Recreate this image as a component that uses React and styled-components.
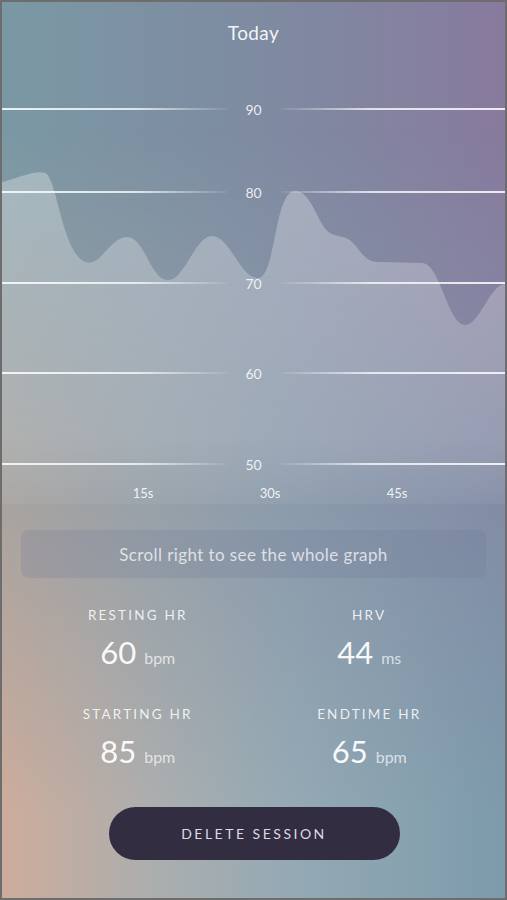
import React from 'react';
import styled, { createGlobalStyle } from 'styled-components';

const GlobalStyle = createGlobalStyle`
    html, body {
        margin: 0;
        padding: 0;
        background: #6d6d6d;
    }
    * {
        box-sizing: border-box;
    }
`

const Frame = styled.div`
    position: relative;
    width: 507px;
    height: 900px;
    border: 2px solid #6d6d6d;
    overflow: hidden;
    display: flex;
    flex-direction: column;
    font-family: Lato, "Open Sans", sans-serif;
    color: #fff;
    background: linear-gradient(to right, #7a98a4 0%, #7f8aa1 55%, #887a9e 100%);

    &::before {
        content: '';
        position: absolute;
        inset: 0;
        background: linear-gradient(to right, #cdac9b 0%, #acaeae 30%, #94a9b4 58%, #7d9bab 100%);
        -webkit-mask-image: linear-gradient(to bottom, transparent 14%, rgba(0,0,0,0.5) 52%, #000 90%);
        mask-image: linear-gradient(to bottom, transparent 14%, rgba(0,0,0,0.5) 52%, #000 90%);
    }
`

const Header = styled.div`
    position: relative;
    height: 62px;
    padding-top: 20px;
    text-align: center;
    font-size: 19px;
    line-height: 22px;
    color: rgba(255, 255, 255, 0.92);
    letter-spacing: 0.4px;
`

const Chart = styled.div`
    position: relative;
    height: 440px;
    display: flex;
    flex-direction: column;
`

const Curve = styled.svg`
    position: absolute;
    top: 0;
    left: 0;
    width: 503px;
    height: 440px;
`

const GridRow = styled.div`
    position: relative;
    z-index: 1;
    height: 20px;
    margin-top: ${p => p.$mt}px;
    display: flex;
    align-items: center;
`

const Line = styled.div`
    flex: 1;
    height: 1.5px;
    background: linear-gradient(
        ${p => (p.$side === 'left' ? 'to right' : 'to left')},
        rgba(255, 255, 255, 0.85) 0%,
        rgba(255, 255, 255, 0.75) 60%,
        rgba(255, 255, 255, 0.05) 100%
    );
`

const GridLabel = styled.span`
    width: 54px;
    text-align: center;
    font-size: 14px;
    color: rgba(255, 255, 255, 0.85);
`

const XAxis = styled.div`
    position: relative;
    z-index: 1;
    margin-top: 9px;
    padding-left: 33px;
    display: flex;
    justify-content: center;
    line-height: 20px;
`

const Tick = styled.span`
    width: 127px;
    text-align: center;
    font-size: 13px;
    color: rgba(255, 255, 255, 0.88);
`

const Banner = styled.div`
    position: relative;
    margin: 26px 19px 0;
    height: 48px;
    border-radius: 8px;
    background: rgba(110, 120, 150, 0.22);
    display: flex;
    align-items: center;
    justify-content: center;
    font-size: 17px;
    color: rgba(255, 255, 255, 0.72);
    letter-spacing: 0.4px;
`

const Stats = styled.div`
    position: relative;
    margin-top: 29px;
    padding: 0 20px;
    display: grid;
    grid-template-columns: 1fr 1fr;
    row-gap: 36px;
`

const Stat = styled.div`
    display: flex;
    flex-direction: column;
    align-items: center;
`

const StatLabel = styled.div`
    font-size: 13.5px;
    line-height: 16px;
    letter-spacing: 2.2px;
    color: rgba(255, 255, 255, 0.85);
`

const StatValue = styled.div`
    margin-top: 11px;
    height: 36px;
    display: flex;
    align-items: baseline;
    gap: 8px;
    font-size: 31px;
    line-height: 36px;
    color: rgba(255, 255, 255, 0.95);

    span {
        font-size: 16px;
        color: rgba(255, 255, 255, 0.7);
    }
`

const Button = styled.button`
    position: relative;
    align-self: center;
    margin-top: 38px;
    margin-left: 1px;
    width: 291px;
    height: 53px;
    border: none;
    border-radius: 27px;
    background: #332d41;
    color: #dcdae3;
    font-family: Lato, "Open Sans", sans-serif;
    font-size: 14px;
    letter-spacing: 2.5px;
    cursor: pointer;
`

const gridLines = [
    { value: 90, mt: 35 },
    { value: 80, mt: 63 },
    { value: 70, mt: 71 },
    { value: 60, mt: 70 },
    { value: 50, mt: 71 },
]

const stats = [
    { label: 'RESTING HR', value: 60, unit: 'bpm' },
    { label: 'HRV', value: 44, unit: 'ms' },
    { label: 'STARTING HR', value: 85, unit: 'bpm' },
    { label: 'ENDTIME HR', value: 65, unit: 'bpm' },
]

const curvePath = `
    M2,182
    C20,178 34,170 45,173
    C57,177 62,252 85,262
    C100,268 110,237 127,237
    C145,237 150,280 168,280
    C185,280 195,236 212,236
    C230,236 240,278 258,278
    C276,278 274,191 295,191
    C312,191 318,226 330,233
    C338,237 342,236 348,239
    C358,244 362,262 378,262
    L422,263
    C440,263 448,325 465,325
    C480,325 490,284 505,284
    L505,504 L2,504 Z
`

export default function App() {
    return (
        <>
            <GlobalStyle />
            <Frame>
                <Header>Today</Header>
                <Chart>
                    <Curve viewBox="2 64 503 440" preserveAspectRatio="none">
                        <defs>
                            <linearGradient id="fill" x1="0" y1="170" x2="0" y2="504" gradientUnits="userSpaceOnUse">
                                <stop offset="0" stopColor="#fff" stopOpacity="0.3" />
                                <stop offset="0.8" stopColor="#fff" stopOpacity="0.17" />
                                <stop offset="1" stopColor="#fff" stopOpacity="0.05" />
                            </linearGradient>
                        </defs>
                        <path d={curvePath} fill="url(#fill)" />
                    </Curve>
                    {gridLines.map(g => (
                        <GridRow key={g.value} $mt={g.mt}>
                            <Line $side="left" />
                            <GridLabel>{g.value}</GridLabel>
                            <Line $side="right" />
                        </GridRow>
                    ))}
                    <XAxis>
                        <Tick>15s</Tick>
                        <Tick>30s</Tick>
                        <Tick>45s</Tick>
                    </XAxis>
                </Chart>
                <Banner>Scroll right to see the whole graph</Banner>
                <Stats>
                    {stats.map(s => (
                        <Stat key={s.label}>
                            <StatLabel>{s.label}</StatLabel>
                            <StatValue>
                                {s.value}
                                <span>{s.unit}</span>
                            </StatValue>
                        </Stat>
                    ))}
                </Stats>
                <Button>DELETE SESSION</Button>
            </Frame>
        </>
    )
}
